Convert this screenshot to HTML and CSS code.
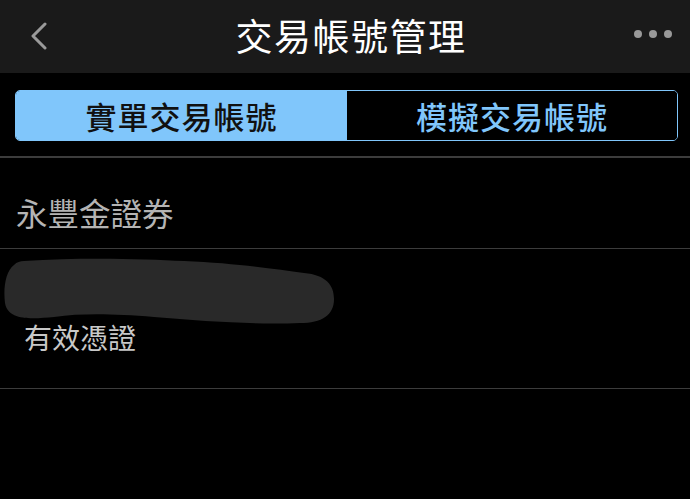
FILE: index.html
```html
<!DOCTYPE html>
<html lang="zh-Hant">
<head>
    <meta charset="UTF-8">
    <meta name="viewport" content="width=device-width, initial-scale=1.0">
    <title>交易帳號管理</title>
    <link rel="stylesheet" href="styles.css">
</head>
<body>
    <!-- Nav Bar -->
    <header class="nav-bar">
        <button class="nav-back" aria-label="返回">
            <svg width="18" height="28" viewBox="0 0 18 28">
                <path d="M15 2 L3 14 L15 26" fill="none" stroke="#9a9a9a" stroke-width="3" stroke-linecap="round" stroke-linejoin="round"/>
            </svg>
        </button>
        <h1 class="nav-title">交易帳號管理</h1>
        <button class="nav-more" aria-label="更多">
            <span class="dot"></span><span class="dot"></span><span class="dot"></span>
        </button>
    </header>

    <!-- Segment -->
    <div class="segment-wrap">
        <div class="segment">
            <div class="segment-item active">實單交易帳號</div>
            <div class="segment-item">模擬交易帳號</div>
        </div>
    </div>

    <!-- Account List -->
    <main class="account-list">
        <div class="broker-row">永豐金證券</div>
        <div class="account-row">
            <!-- account number is scribbled out in the screenshot -->
            <svg class="redacted" width="332" height="70" viewBox="0 0 332 70">
                <path d="M20 4 C80 0 140 2 180 4 C230 6 270 12 300 16 C322 18 330 28 330 42 C330 58 318 66 296 66 C250 68 200 64 150 60 C110 57 80 56 50 60 C28 62 4 64 1 46 C-1 30 2 14 10 8 C13 5 16 4 20 4 Z" fill="#292929"/>
            </svg>
            <div class="account-status">有效憑證</div>
        </div>
    </main>
</body>
</html>
```

FILE: styles.css
```css
/* Global Styles */
body {
    margin: 0;
    padding: 0;
    background: #000;
    color: #fff;
    font-family: "Noto Sans CJK TC", "Noto Sans", sans-serif;
    width: 690px;
    height: 499px;
    overflow: hidden;
}

/* Nav Bar */
.nav-bar {
    height: 73px;
    background: #1a1a1a;
    display: flex;
    align-items: center;
    justify-content: space-between;
    padding: 0 18px 0 30px;
    box-sizing: border-box;
}

.nav-back,
.nav-more {
    background: none;
    border: none;
    padding: 0;
    cursor: pointer;
    display: flex;
    align-items: center;
    width: 42px;
}

.nav-back {
    margin-top: -2px;
}

.nav-title {
    margin: 0;
    font-size: 37px;
    font-weight: 400;
    letter-spacing: 1.5px;
    color: #fff;
    margin-top: -4px;
}

.nav-more {
    gap: 7px;
    justify-content: flex-end;
    margin-top: -6px;
}

.dot {
    width: 8px;
    height: 8px;
    border-radius: 50%;
    background: #999;
}

/* Segment */
.segment-wrap {
    padding: 17px 12px 15px 15px;
    border-bottom: 2px solid #3c3c3c;
}

.segment {
    display: flex;
    height: 51px;
    border: 1.5px solid #80c6fb;
    border-radius: 5px;
    overflow: hidden;
    box-sizing: border-box;
}

.segment-item {
    flex: 1;
    display: flex;
    align-items: center;
    justify-content: center;
    font-size: 31px;
    font-weight: 500;
    color: #80c6fb;
    background: #000;
    letter-spacing: 1px;
}

.segment-item.active {
    background: #80c6fb;
    color: #111;
    flex: 0 0 331px;
}

/* Account List */
.broker-row {
    height: 91px;
    display: flex;
    align-items: center;
    padding: 18px 0 0 16px;
    box-sizing: border-box;
    font-size: 31.5px;
    color: #b4b4b4;
    border-bottom: 1.5px solid #3c3c3c;
}

.account-row {
    height: 140px;
    padding: 8px 0 0 4px;
    box-sizing: border-box;
    border-bottom: 1.5px solid #3c3c3c;
}

.redacted {
    display: block;
}

.account-status {
    padding-left: 20px;
    margin-top: -10px;
    font-size: 28px;
    color: #c8c8c8;
}
```
